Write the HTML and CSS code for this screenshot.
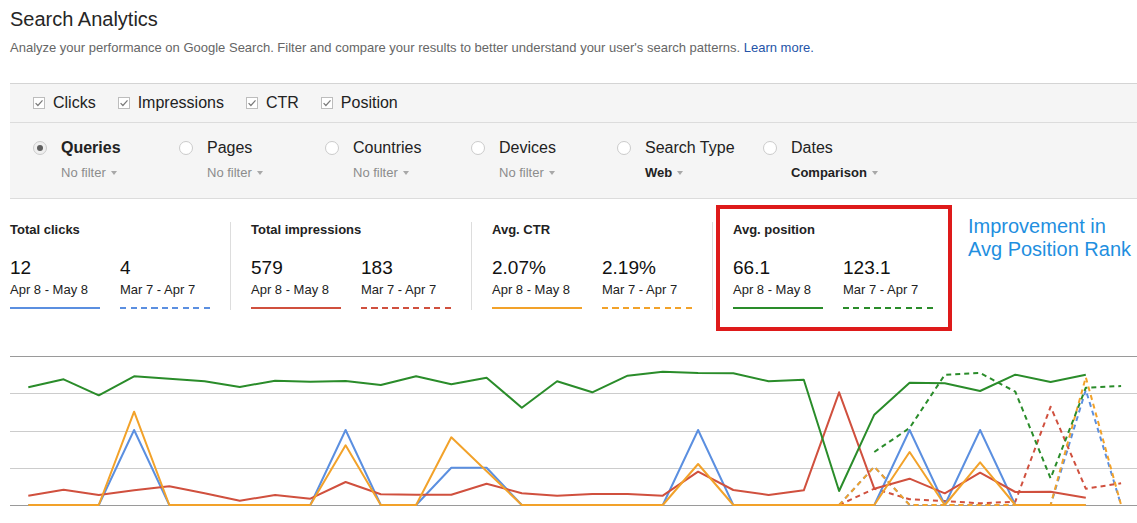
FILE: index.html
```html
<!DOCTYPE html>
<html lang="en">
<head>
<meta charset="utf-8">
<title>Search Analytics</title>
<link rel="stylesheet" href="styles.css">
</head>
<body>
<div class="content">
  <h1 class="title">Search Analytics</h1>
  <p class="subtitle">Analyze your performance on Google Search. Filter and compare your results to better understand your user's search patterns. <a class="learn" href="#">Learn more.</a></p>

  <div class="panel">
    <div class="checks">
      <label class="check"><svg class="cb" viewBox="0 0 12 12"><rect x=".5" y=".5" width="11" height="11" fill="#fff" stroke="#bdbdbd"/><path d="M2.6 6.1l2.3 2.4 4.6-5.1" fill="none" stroke="#7a7a7a" stroke-width="1.2"/></svg><span>Clicks</span></label>
      <label class="check"><svg class="cb" viewBox="0 0 12 12"><rect x=".5" y=".5" width="11" height="11" fill="#fff" stroke="#bdbdbd"/><path d="M2.6 6.1l2.3 2.4 4.6-5.1" fill="none" stroke="#7a7a7a" stroke-width="1.2"/></svg><span>Impressions</span></label>
      <label class="check"><svg class="cb" viewBox="0 0 12 12"><rect x=".5" y=".5" width="11" height="11" fill="#fff" stroke="#bdbdbd"/><path d="M2.6 6.1l2.3 2.4 4.6-5.1" fill="none" stroke="#7a7a7a" stroke-width="1.2"/></svg><span>CTR</span></label>
      <label class="check"><svg class="cb" viewBox="0 0 12 12"><rect x=".5" y=".5" width="11" height="11" fill="#fff" stroke="#bdbdbd"/><path d="M2.6 6.1l2.3 2.4 4.6-5.1" fill="none" stroke="#7a7a7a" stroke-width="1.2"/></svg><span>Position</span></label>
    </div>
    <div class="dims">
      <div class="dim">
        <span class="radio selected"></span>
        <div class="dim-text">
          <div class="dim-label bold">Queries</div>
          <div class="dim-filter">No filter<span class="caret"></span></div>
        </div>
      </div>
      <div class="dim">
        <span class="radio"></span>
        <div class="dim-text">
          <div class="dim-label">Pages</div>
          <div class="dim-filter">No filter<span class="caret"></span></div>
        </div>
      </div>
      <div class="dim">
        <span class="radio"></span>
        <div class="dim-text">
          <div class="dim-label">Countries</div>
          <div class="dim-filter">No filter<span class="caret"></span></div>
        </div>
      </div>
      <div class="dim">
        <span class="radio"></span>
        <div class="dim-text">
          <div class="dim-label">Devices</div>
          <div class="dim-filter">No filter<span class="caret"></span></div>
        </div>
      </div>
      <div class="dim">
        <span class="radio"></span>
        <div class="dim-text">
          <div class="dim-label">Search Type</div>
          <div class="dim-filter strong">Web<span class="caret"></span></div>
        </div>
      </div>
      <div class="dim">
        <span class="radio"></span>
        <div class="dim-text">
          <div class="dim-label">Dates</div>
          <div class="dim-filter strong">Comparison<span class="caret"></span></div>
        </div>
      </div>
    </div>
  </div>

  <div class="metrics">
    <div class="metric">
      <div class="metric-title">Total clicks</div>
      <div class="pair">
        <div class="period">
          <div class="value">12</div>
          <div class="date">Apr 8 - May 8</div>
          <div class="line solid blue"></div>
        </div>
        <div class="period">
          <div class="value">4</div>
          <div class="date">Mar 7 - Apr 7</div>
          <div class="line dashed blue"></div>
        </div>
      </div>
    </div>
    <div class="metric">
      <div class="metric-title">Total impressions</div>
      <div class="pair">
        <div class="period">
          <div class="value">579</div>
          <div class="date">Apr 8 - May 8</div>
          <div class="line solid red"></div>
        </div>
        <div class="period">
          <div class="value">183</div>
          <div class="date">Mar 7 - Apr 7</div>
          <div class="line dashed red"></div>
        </div>
      </div>
    </div>
    <div class="metric">
      <div class="metric-title">Avg. CTR</div>
      <div class="pair">
        <div class="period">
          <div class="value">2.07%</div>
          <div class="date">Apr 8 - May 8</div>
          <div class="line solid orange"></div>
        </div>
        <div class="period">
          <div class="value">2.19%</div>
          <div class="date">Mar 7 - Apr 7</div>
          <div class="line dashed orange"></div>
        </div>
      </div>
    </div>
    <div class="metric">
      <div class="metric-title">Avg. position</div>
      <div class="pair">
        <div class="period">
          <div class="value">66.1</div>
          <div class="date">Apr 8 - May 8</div>
          <div class="line solid green"></div>
        </div>
        <div class="period">
          <div class="value">123.1</div>
          <div class="date">Mar 7 - Apr 7</div>
          <div class="line dashed green"></div>
        </div>
      </div>
    </div>
  </div>
</div>

<svg class="chart" width="1137" height="183" viewBox="0 340 1137 183">
  <g class="grid">
    <line x1="10" y1="356.5" x2="1137" y2="356.5" stroke="#9a9a9a"/>
    <line x1="10" y1="393.5" x2="1137" y2="393.5" stroke="#cccccc"/>
    <line x1="10" y1="431.5" x2="1137" y2="431.5" stroke="#cccccc"/>
    <line x1="10" y1="468.5" x2="1137" y2="468.5" stroke="#cccccc"/>
    <line x1="10" y1="505.5" x2="1137" y2="505.5" stroke="#9a9a9a"/>
  </g>
  <g fill="none" stroke-width="2" stroke-linejoin="round">
    <polyline class="s-blue" stroke-dasharray="5 4" points="839.1,505 874.3,466.7 909.6,505 1050.6,505 1085.8,390 1121.1,505"/>
    <polyline class="s-red" stroke-dasharray="5 4" points="839.1,505 874.3,488.7 909.6,499.3 944.8,501 980.1,503.3 1015.3,501.7 1050.6,406.7 1085.8,488.7 1121.1,483.3"/>
    <polyline class="s-orange" stroke-dasharray="5 4" points="839.1,505 874.3,466.7 909.6,505 1050.6,505 1085.8,377.3 1121.1,505"/>
    <polyline class="s-green" stroke-dasharray="5 4" points="874.3,452 909.6,428 944.8,374.7 980.1,373 1015.3,391.7 1050.6,478.3 1085.8,387.7 1121.1,386"/>

    <polyline class="s-blue" points="28.3,505 98.8,505 134.1,430 169.3,505 310.3,505 345.6,430 380.8,505 416.1,505 451.3,467.7 486.6,467.7 521.8,505 662.8,505 698.1,430 733.3,505 874.3,505 909.6,430 944.8,505 980.1,430 1015.3,505 1085.8,505"/>
    <polyline class="s-red" points="28.3,495.7 63.6,489.7 98.8,495 134.1,490.3 169.3,486.3 204.6,493.3 239.8,500.7 275.1,495 310.3,498.7 345.6,482 380.8,494.3 416.1,494.7 451.3,494.7 486.6,483.7 521.8,493.3 557.1,495.7 592.3,494 627.6,494 662.8,495.7 698.1,471.7 733.3,490 768.6,495 803.8,490.3 839.1,392.3 874.3,488.7 909.6,478.7 944.8,493.3 980.1,472.7 1015.3,492 1050.6,491.7 1085.8,497.7"/>
    <polyline class="s-orange" points="28.3,505 98.8,505 134.1,411.7 169.3,505 310.3,505 345.6,445.3 380.8,505 416.1,505 451.3,437.3 521.8,505 662.8,505 698.1,464 733.3,505 874.3,505 909.6,452 944.8,505 980.1,462.3 1015.3,505 1085.8,505"/>
    <polyline class="s-green" points="28.3,387.3 63.6,379.3 98.8,395.3 134.1,376.3 169.3,378.7 204.6,381.3 239.8,387 275.1,380.7 310.3,381.7 345.6,381 380.8,385 416.1,376.3 451.3,384.3 486.6,377.7 521.8,407.7 557.1,381.3 592.3,392.3 627.6,375.7 662.8,371.7 698.1,373 733.3,373.3 768.6,381.3 803.8,379.7 839.1,491 874.3,414.7 909.6,382.7 944.8,383.3 980.1,391 1015.3,374.7 1050.6,382 1085.8,374.7"/>
  </g>
</svg>

<div class="highlight"></div>
<div class="annotation">Improvement in<br>Avg Position Rank</div>
</body>
</html>
```

FILE: styles.css
```css
* {
  box-sizing: border-box;
}

html, body {
  margin: 0;
  padding: 0;
  background: #ffffff;
  overflow: hidden;
}

body {
  font-family: "Liberation Sans", Arial, Helvetica, sans-serif;
  color: #222222;
  position: relative;
  width: 1137px;
  height: 523px;
}

.content {
  padding-left: 10px;
}

.title {
  margin: 7px 0 0;
  font-size: 20px;
  line-height: 24px;
  font-weight: normal;
  color: #262626;
}

.subtitle {
  margin: 9px 0 0;
  font-size: 13px;
  line-height: 16px;
  color: #666666;
}

.learn {
  color: #2554a8;
  text-decoration: none;
}

/* Filter panel */
.panel {
  margin-top: 27px;
  background: #f5f5f5;
  border-top: 1px solid #d4d4d4;
  border-bottom: 1px solid #dcdcdc;
}

.checks {
  height: 39px;
  display: flex;
  align-items: center;
  gap: 22px;
  padding-left: 23px;
  border-bottom: 1px solid #dcdcdc;
}

.check {
  display: flex;
  align-items: center;
  gap: 8px;
  font-size: 16px;
  line-height: 20px;
  color: #222222;
}

.cb {
  width: 12px;
  height: 12px;
  display: block;
}

.dims {
  display: flex;
  padding: 15px 0 17px 23px;
}

.dim {
  width: 146px;
  display: flex;
  align-items: flex-start;
  gap: 14px;
}

.radio {
  flex: none;
  width: 14px;
  height: 14px;
  margin-top: 3px;
  border-radius: 50%;
  border: 1px solid #cbcbcb;
  background: #ffffff;
  display: flex;
  align-items: center;
  justify-content: center;
}

.radio.selected {
  background: #efefef;
}

.radio.selected::after {
  content: "";
  width: 6px;
  height: 6px;
  border-radius: 50%;
  background: #5e5e5e;
}

.dim-label {
  font-size: 16px;
  line-height: 20px;
  color: #222222;
  white-space: nowrap;
}

.dim-label.bold {
  font-weight: bold;
}

.dim-filter {
  margin-top: 7px;
  font-size: 13px;
  line-height: 16px;
  color: #8c8c8c;
  display: flex;
  align-items: center;
  white-space: nowrap;
}

.dim-filter.strong {
  color: #222222;
  font-weight: bold;
}

.caret {
  margin-left: 5px;
  width: 0;
  height: 0;
  border-left: 3.5px solid transparent;
  border-right: 3.5px solid transparent;
  border-top: 4px solid #a8a8a8;
}

/* Metrics */
.metrics {
  display: flex;
  margin-top: 23px;
}

.metric {
  width: 241px;
  padding-left: 20px;
  padding-bottom: 1px;
  border-right: 1px solid #dddddd;
}

.metric:first-child {
  width: 221px;
  padding-left: 0;
}

.metric:last-child {
  border-right: none;
}

.metric-title {
  font-size: 13px;
  line-height: 16px;
  font-weight: bold;
  color: #222222;
}

.pair {
  display: flex;
  gap: 20px;
  margin-top: 19px;
}

.period {
  width: 90px;
}

.value {
  font-size: 19px;
  line-height: 22px;
  color: #111111;
}

.date {
  margin-top: 3px;
  font-size: 13px;
  line-height: 16px;
  color: #222222;
  white-space: nowrap;
}

.line {
  margin-top: 9px;
  height: 2px;
}

.line.solid.blue { background: #5b8fe0; }
.line.solid.red { background: #d0503e; }
.line.solid.orange { background: #f2a22a; }
.line.solid.green { background: #2a8c2a; }

.line.dashed.blue { background: repeating-linear-gradient(90deg, #5b8fe0 0 6px, transparent 6px 10.5px); }
.line.dashed.red { background: repeating-linear-gradient(90deg, #d0503e 0 6px, transparent 6px 10.5px); }
.line.dashed.orange { background: repeating-linear-gradient(90deg, #f2a22a 0 6px, transparent 6px 10.5px); }
.line.dashed.green { background: repeating-linear-gradient(90deg, #2a8c2a 0 6px, transparent 6px 10.5px); }

/* Chart */
.chart {
  display: block;
  margin-top: 30px;
}

.s-blue { stroke: #5b8fe0; }
.s-red { stroke: #d0503e; }
.s-orange { stroke: #f2a22a; }
.s-green { stroke: #2a8c2a; }

/* Annotation overlays */
.highlight {
  position: absolute;
  left: 716px;
  top: 205px;
  width: 236px;
  height: 126px;
  border: 4px solid #de1a1a;
}

.annotation {
  position: absolute;
  left: 968px;
  top: 215px;
  font-size: 20px;
  line-height: 22.5px;
  color: #1f8fe0;
  white-space: nowrap;
}
```
